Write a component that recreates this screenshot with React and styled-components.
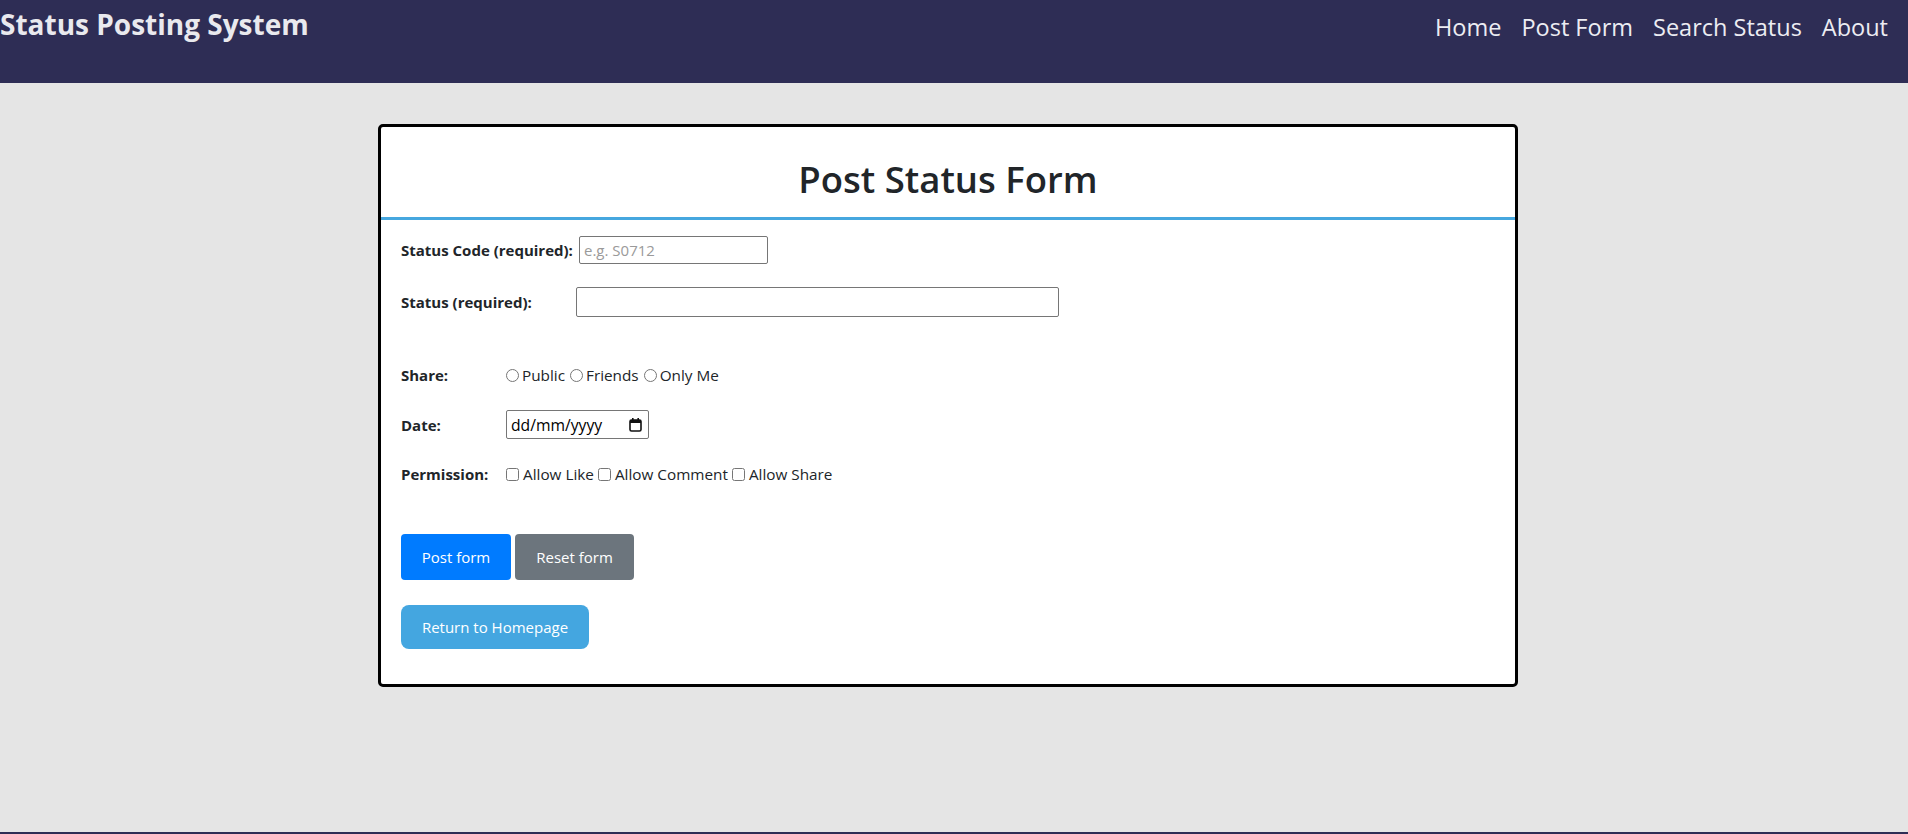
import styled, { createGlobalStyle } from 'styled-components'

const GlobalStyle = createGlobalStyle`
    body {
        margin: 0;
        background: #e5e5e5;
        font-family: "Open Sans", "Noto Sans", sans-serif;
        color: #212529;
    }
    * {
        box-sizing: border-box;
    }
`

const App = () => {
    return (
        <>
            <GlobalStyle />
            <Header>
                <Brand>Status Posting System</Brand>
                <Nav>
                    <NavLink href="#">Home</NavLink>
                    <NavLink href="#">Post Form</NavLink>
                    <NavLink href="#">Search Status</NavLink>
                    <NavLink href="#">About</NavLink>
                </Nav>
            </Header>
            <Main>
                <Card>
                    <Title>Post Status Form</Title>
                    <Form onSubmit={(e) => e.preventDefault()}>
                        <Row>
                            <Label $width={178}>Status Code (required):</Label>
                            <TextInput $width={189} $height={28} placeholder="e.g. S0712" />
                        </Row>
                        <Row $top={23}>
                            <Label $width={175}>Status (required):</Label>
                            <TextInput $width={483} $height={30} />
                        </Row>
                        <Row $top={48}>
                            <Label $width={104}>Share:</Label>
                            <Option><Radio type="radio" name="share" />Public</Option>
                            <Option><Radio type="radio" name="share" />Friends</Option>
                            <Option><Radio type="radio" name="share" />Only Me</Option>
                        </Row>
                        <Row $top={25}>
                            <Label $width={105}>Date:</Label>
                            <DateBox>
                                <span>dd/mm/yyyy</span>
                                <svg width="13" height="14" viewBox="0 0 13 14">
                                    <rect x="1" y="2" width="11" height="11" rx="1.5" fill="none" stroke="#111" strokeWidth="1.6" />
                                    <rect x="1" y="2" width="11" height="3" fill="#111" />
                                    <rect x="3" y="0" width="1.6" height="3" fill="#111" />
                                    <rect x="8.4" y="0" width="1.6" height="3" fill="#111" />
                                </svg>
                            </DateBox>
                        </Row>
                        <Row $top={25}>
                            <Label $width={104}>Permission:</Label>
                            <Option $check><Check type="checkbox" />Allow Like</Option>
                            <Option $check><Check type="checkbox" />Allow Comment</Option>
                            <Option $check><Check type="checkbox" />Allow Share</Option>
                        </Row>
                        <Row $top={50}>
                            <Button type="submit" $bg="#007bff" $width={110}>Post form</Button>
                            <Button type="reset" $bg="#6c757d" $width={119}>Reset form</Button>
                        </Row>
                        <Row $top={25}>
                            <ReturnButton type="button">Return to Homepage</ReturnButton>
                        </Row>
                    </Form>
                </Card>
            </Main>
            <Footer />
        </>
    );
}

const Header = styled.header`
    display: flex;
    justify-content: space-between;
    align-items: flex-start;
    height: 83px;
    padding-right: 20px;
    background: #2e2d55;
`

const Brand = styled.h1`
    margin: 5px 0 0 0;
    font-size: 28px;
    font-weight: 700;
    line-height: normal;
    color: #e9e9ee;
`

const Nav = styled.nav`
    display: flex;
    gap: 20px;
    margin-top: 11px;
`

const NavLink = styled.a`
    font-size: 23.5px;
    line-height: normal;
    color: #ececf2;
    text-decoration: none;
`

const Main = styled.main`
    min-height: 749px;
    padding-top: 41px;
`

const Card = styled.div`
    width: 1140px;
    margin-left: 378px;
    background: #fff;
    border: 3px solid #000;
    border-radius: 5px;
`

const Title = styled.h2`
    margin: 0;
    padding: 27px 0 13px;
    text-align: center;
    font-size: 36.5px;
    font-weight: 600;
    line-height: normal;
    color: #212529;
    border-bottom: 3px solid #46a7df;
`

const Form = styled.form`
    padding: 16px 20px 35px;
`

const Row = styled.div`
    display: flex;
    align-items: center;
    margin-top: ${(p) => p.$top || 0}px;
`

const Label = styled.label`
    flex: 0 0 ${(p) => p.$width}px;
    font-size: 15px;
    font-weight: 700;
    color: #212529;
`

const TextInput = styled.input`
    width: ${(p) => p.$width}px;
    height: ${(p) => p.$height}px;
    padding: 1px 4px;
    border: 1px solid #767676;
    border-radius: 2px;
    font-family: inherit;
    font-size: 15px;
    color: #212529;

    &::placeholder {
        color: #9a9a9a;
    }
`

const Option = styled.label`
    display: inline-flex;
    align-items: center;
    gap: ${(p) => (p.$check ? 4 : 3)}px;
    margin-right: ${(p) => (p.$check ? 3 : 4)}px;
    font-size: 15.3px;
    color: #212529;
`

const Radio = styled.input`
    width: 13px;
    height: 13px;
    margin: 0 0 0 1px;
`

const Check = styled.input`
    width: 13px;
    height: 13px;
    margin: 0 0 0 1px;
`

const DateBox = styled.div`
    display: flex;
    align-items: center;
    justify-content: space-between;
    width: 143px;
    height: 29px;
    padding: 0 6px 0 4px;
    border: 1px solid #767676;
    border-radius: 2px;
    font-size: 15.7px;
    color: #000;
`

const Button = styled.button`
    width: ${(p) => p.$width}px;
    height: 46px;
    margin-right: 4px;
    border: none;
    border-radius: 4px;
    background: ${(p) => p.$bg};
    color: #fff;
    font-family: inherit;
    font-size: 15px;
    cursor: pointer;
`

const ReturnButton = styled.button`
    width: 188px;
    height: 44px;
    border: none;
    border-radius: 8px;
    background: #44a6e0;
    color: #fff;
    font-family: inherit;
    font-size: 15px;
    cursor: pointer;
`

const Footer = styled.footer`
    height: 60px;
    background: #2e2d55;
`

export default App;
